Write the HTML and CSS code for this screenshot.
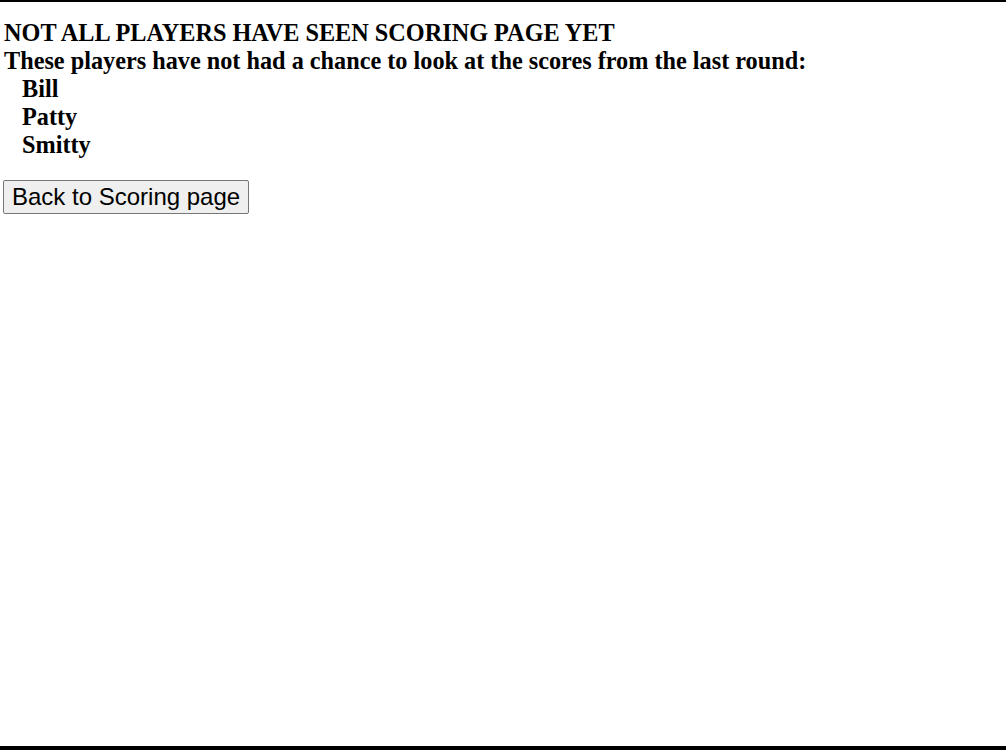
FILE: index.html
```html
<!DOCTYPE html>
<html lang="en">
<head>
  <meta charset="UTF-8">
  <title>Not all players have seen scoring page</title>
  <link rel="stylesheet" href="styles.css">
</head>
<body>
  <div class="frame">
    <div class="content">
      <div class="heading">NOT ALL PLAYERS HAVE SEEN SCORING PAGE YET</div>
      <div class="paragraph">These players have not had a chance to look at the scores from the last round:</div>
      <div class="players">
        <div class="player">Bill</div>
        <div class="player">Patty</div>
        <div class="player">Smitty</div>
      </div>
      <button class="button">Back to Scoring page</button>
    </div>
  </div>
</body>
</html>
```

FILE: styles.css
```css
body {
  margin: 0;
  padding: 0;
  background-color: white;
  font-family: "Liberation Serif", "Times New Roman", serif;
}
.frame {
  height: 750px;
  box-sizing: border-box;
  border-top: 2px solid black;
  border-bottom: 4px solid black;
}
.content {
  padding: 17px 4px 0 4px;
  font-size: 24.25px;
  font-weight: bold;
  line-height: 28px;
  color: #000;
}
.players {
  padding-left: 18px;
}
.button {
  margin-top: 21px;
  margin-left: -1px;
  font-family: "Liberation Sans", Arial, sans-serif;
  font-size: 24px;
  padding: 2px 8px;
  background-color: #efefef;
  border: 1px solid #767676;
  border-radius: 2px;
  color: black;
}
```
